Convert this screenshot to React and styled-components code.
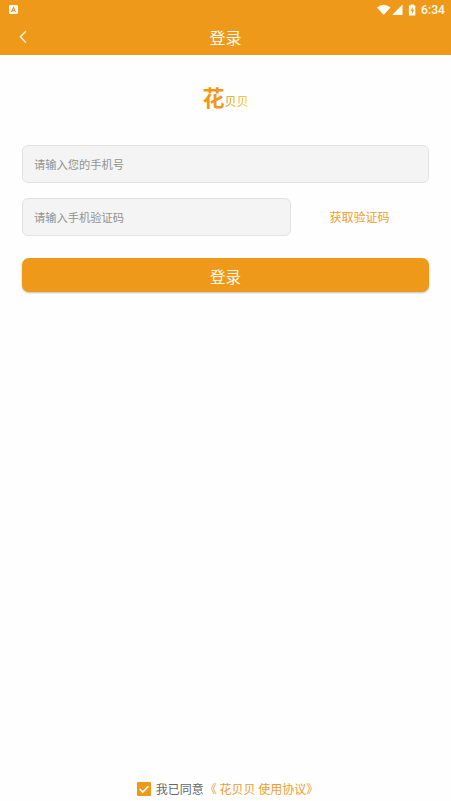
import React, { useState } from "react";
import styled, { createGlobalStyle } from "styled-components";

const App = () => {
  const [phone, setPhone] = useState("");
  const [code, setCode] = useState("");
  const [agreed, setAgreed] = useState(true);

  return (
    <Page>
      <GlobalStyle />
      <Header>
        <StatusBar>
          <svg width="9" height="9" viewBox="0 0 9 9">
            <rect width="9" height="9" rx="1.2" fill="#fffaf0" />
            <path
              d="M2.5 7 4.5 2.4 6.5 7M3.3 5.6h2.4"
              fill="none"
              stroke="#d99a45"
              strokeWidth="1.1"
            />
          </svg>
          <StatusIcons>
            <svg width="39" height="12" viewBox="0 0 39 12" fill="#fffdf8">
              <path d="M0 3.4Q6.75-1.8 13.5 3.4L6.75 11Z" />
              <path d="M25.5.5V11H15.2Z" />
              <path
                fillRule="evenodd"
                d="M33.6 1.4V.5h3.2v.9h1.5v10h-6.4v-10ZM36 2.8 33.4 6.8h1.5v3.1l2.4-4.2h-1.7Z"
              />
            </svg>
            <Clock>6:34</Clock>
          </StatusIcons>
        </StatusBar>
        <TitleBar>
          <BackButton aria-label="返回">
            <svg width="8" height="14" viewBox="0 0 8 14">
              <path
                d="M6.8 1.2 1.4 6.8 6.8 12.4"
                fill="none"
                stroke="#fff3dc"
                strokeWidth="1.5"
              />
            </svg>
          </BackButton>
          <h1>登录</h1>
        </TitleBar>
      </Header>

      <Logo>
        <strong>花</strong>
        <span>贝贝</span>
      </Logo>

      <Form onSubmit={(e) => e.preventDefault()}>
        <Field
          type="tel"
          placeholder="请输入您的手机号"
          value={phone}
          onChange={(e) => setPhone(e.target.value)}
        />
        <CodeRow>
          <Field
            placeholder="请输入手机验证码"
            value={code}
            onChange={(e) => setCode(e.target.value)}
          />
          <CodeButton type="button">获取验证码</CodeButton>
        </CodeRow>
        <LoginButton type="submit">登录</LoginButton>
      </Form>

      <Agreement>
        <Checkbox
          type="button"
          role="checkbox"
          aria-checked={agreed}
          $checked={agreed}
          onClick={() => setAgreed(!agreed)}
        >
          {agreed && (
            <svg width="14" height="14" viewBox="0 0 14 14">
              <path
                d="M2.7 7 5.7 10 11.5 4.2"
                fill="none"
                stroke="#fff"
                strokeWidth="1.6"
              />
            </svg>
          )}
        </Checkbox>
        <span>我已同意</span>
        <a href="#agreement">《 花贝贝 使用协议》</a>
      </Agreement>
    </Page>
  );
};

const GlobalStyle = createGlobalStyle`
  * {
    box-sizing: border-box;
  }

  body {
    margin: 0;
    background: #fefefe;
  }

  body,
  button,
  input {
    font-family: "Noto Sans CJK SC", sans-serif;
  }

  button {
    padding: 0;
    border: 0;
    background: none;
  }
`;

const Page = styled.main`
  display: flex;
  flex-direction: column;
  height: 100vh;
  overflow: hidden;
`;

const Header = styled.header`
  height: 55px;
  background: #ee991a;
  color: #fff9ed;
`;

const StatusBar = styled.div`
  display: flex;
  align-items: center;
  justify-content: space-between;
  height: 19px;
  padding: 0 6px 0 9px;
`;

const StatusIcons = styled.div`
  display: flex;
  align-items: center;
  gap: 5px;
`;

const Clock = styled.span`
  font: 500 12.2px/18px Roboto, sans-serif;
`;

const TitleBar = styled.div`
  display: grid;
  grid-template-columns: 46px 1fr 46px;
  align-items: center;
  height: 36px;

  h1 {
    margin: 0;
    font-size: 16px;
    font-weight: 400;
    line-height: 36px;
    text-align: center;
  }
`;

const BackButton = styled.button`
  display: flex;
  align-items: center;
  height: 36px;
  padding-left: 19px;
`;

const Logo = styled.div`
  display: flex;
  align-items: baseline;
  justify-content: center;
  height: 90px;
  padding-top: 25px;
  line-height: 32px;
  color: #ee991a;

  strong {
    font-size: 22px;
    font-weight: 700;
  }

  span {
    font-size: 12px;
    font-weight: 500;
    background: linear-gradient(90deg, #f0a52d, #f7cf55);
    background-clip: text;
    color: transparent;
  }
`;

const Form = styled.form`
  display: flex;
  flex-direction: column;
  padding: 0 22px;
`;

const Field = styled.input`
  width: 100%;
  height: 38px;
  padding: 0 11px 1px;
  border: 1px solid #e2e2e2;
  border-radius: 6px;
  outline: none;
  background: #f4f4f4;
  font-size: 11.25px;
  color: #555;

  &::placeholder {
    color: #929292;
  }
`;

const CodeRow = styled.div`
  display: grid;
  grid-template-columns: 269px 1fr;
  margin-top: 15px;
`;

const CodeButton = styled.button`
  padding: 0 1px 2px 0;
  font-size: 12px;
  color: #ee9d2c;
`;

const LoginButton = styled.button`
  height: 34px;
  margin-top: 22px;
  padding-top: 2px;
  border-radius: 7px;
  background: #ee991a;
  box-shadow: 0 1px 2px rgba(0, 0, 0, 0.25);
  font-size: 15.5px;
  color: #fff9ed;
`;

const Agreement = styled.div`
  display: flex;
  align-items: center;
  justify-content: center;
  height: 18px;
  margin-top: auto;
  margin-bottom: 3px;
  padding-left: 4px;
  font-size: 12px;
  line-height: 18px;
  color: #666;

  a {
    margin-left: 1px;
    color: #ee9d2c;
    text-decoration: none;
  }
`;

const Checkbox = styled.button`
  display: flex;
  width: 14px;
  height: 14px;
  margin-right: 5px;
  border: ${({ $checked }) => ($checked ? "0" : "1px solid #ee991a")};
  border-radius: 1px;
  background: ${({ $checked }) => ($checked ? "#ee991a" : "#fff")};
`;

export default App;
